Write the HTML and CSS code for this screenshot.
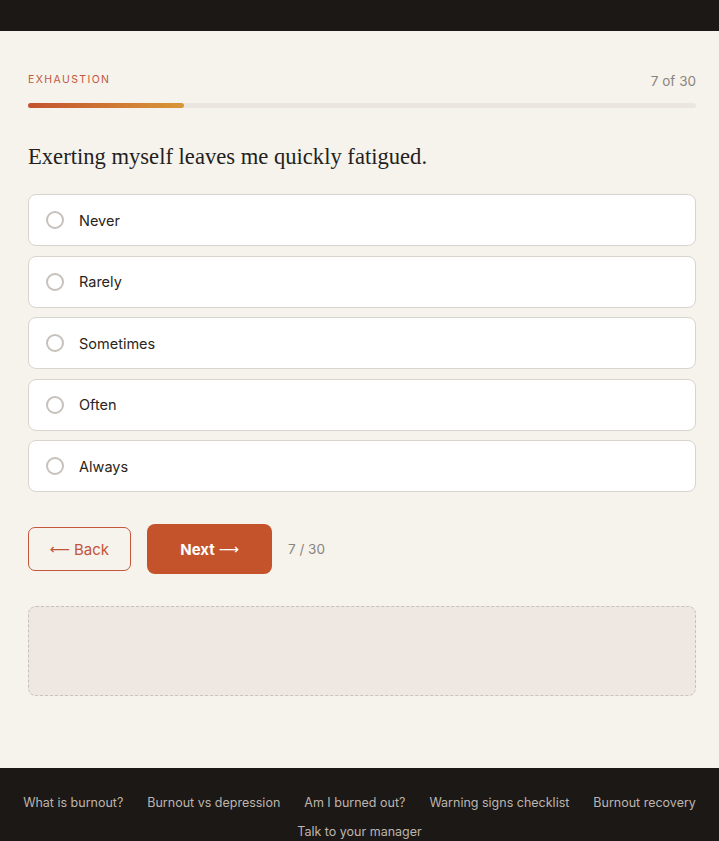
FILE: index.html
```html
<!DOCTYPE html>
<html>
<head>
    <meta charset="utf-8">
    <title>Burnout check</title>
    <link rel="stylesheet" href="styles.css">
</head>
<body>
    <div class="topbar"></div>
    <div class="quiz">
        <div class="quiz_head">
            <span class="quiz_cat">EXHAUSTION</span>
            <span class="quiz_count">7 of 30</span>
        </div>
        <div class="progress"><div class="progress_fill" style="width: 23.3%;"></div></div>

        <h2 class="question">Exerting myself leaves me quickly fatigued.</h2>

        <div class="options">
            <label class="opt"><span class="radio"></span>Never</label>
            <label class="opt"><span class="radio"></span>Rarely</label>
            <label class="opt"><span class="radio"></span>Sometimes</label>
            <label class="opt"><span class="radio"></span>Often</label>
            <label class="opt"><span class="radio"></span>Always</label>
        </div>

        <div class="nav">
            <a href="#" class="btn_back"><span class="arr">&#x27F5;</span> Back</a>
            <a href="#" class="btn_next">Next <span class="arr">&#x27F6;</span></a>
            <span class="nav_count">7 / 30</span>
        </div>

        <div class="slot"></div>
    </div>
    <div class="footer">
        <a href="#">What is burnout?</a>
        <a href="#">Burnout vs depression</a>
        <a href="#">Am I burned out?</a>
        <a href="#">Warning signs checklist</a>
        <a href="#">Burnout recovery</a>
        <a href="#">Talk to your manager</a>
    </div>
</body>
</html>
```

FILE: styles.css
```css
* {
    margin: 0;
    padding: 0;
    box-sizing: border-box;
    text-decoration: none;
}
body {
    background-color: #f6f2ec;
    font-family: Inter, "Liberation Sans", sans-serif;
    color: #2a2420;
}
.topbar {
    height: 31px;
    background-color: #1c1816;
}
.quiz {
    padding: 38px 23px 72px 28px;
}
.quiz_head {
    display: flex;
    justify-content: space-between;
    align-items: center;
    height: 20px;
}
.quiz_cat {
    font-size: 10.5px;
    letter-spacing: 1.4px;
    color: #c0583e;
}
.quiz_count {
    font-size: 13.5px;
    color: #8a847e;
    padding-top: 4px;
}
.progress {
    margin-top: 14px;
    height: 5px;
    border-radius: 3px;
    background-color: #ebe6e0;
}
.progress_fill {
    height: 100%;
    border-radius: 3px;
    background: linear-gradient(to right, #c4522e, #d99736);
}
.question {
    margin-top: 35px;
    font-family: "Liberation Serif", serif;
    font-weight: normal;
    font-size: 22.6px;
    line-height: 28px;
    color: #231f1d;
}
.options {
    margin-top: 23px;
    display: flex;
    flex-direction: column;
    gap: 9.5px;
}
.opt {
    display: flex;
    align-items: center;
    height: 52px;
    padding-left: 17px;
    background-color: #fff;
    border: 1px solid #d9d4ce;
    border-radius: 8px;
    font-size: 14.5px;
    color: #2a2420;
}
.radio {
    width: 18px;
    height: 18px;
    border: 2px solid #c6c1bb;
    border-radius: 50%;
    margin-right: 15px;
}
.nav {
    margin-top: 32px;
    display: flex;
    align-items: center;
}
.arr {
    font-family: "DejaVu Sans", sans-serif;
    font-weight: normal;
    font-size: 14px;
}
.btn_back {
    display: flex;
    align-items: center;
    justify-content: center;
    gap: 4px;
    width: 103px;
    height: 44px;
    border: 1px solid #c4583c;
    border-radius: 7px;
    color: #c0553a;
    font-size: 15px;
}
.btn_next {
    display: flex;
    align-items: center;
    justify-content: center;
    gap: 4px;
    margin-left: 16px;
    width: 125px;
    height: 50px;
    border-radius: 8px;
    background-color: #c4532c;
    color: #fff;
    font-weight: bold;
    font-size: 15px;
}
.nav_count {
    margin-left: 16px;
    font-size: 13.5px;
    color: #8a847e;
}
.slot {
    margin-top: 32px;
    height: 90px;
    border: 1px dashed #c8c2bb;
    border-radius: 8px;
    background-color: #efe8e2;
}
.footer {
    background-color: #1c1816;
    padding: 20px 12px 24px;
    display: flex;
    flex-wrap: wrap;
    justify-content: center;
    column-gap: 24px;
    line-height: 29px;
}
.footer a {
    font-size: 12.5px;
    color: #bdb5ad;
}
```
